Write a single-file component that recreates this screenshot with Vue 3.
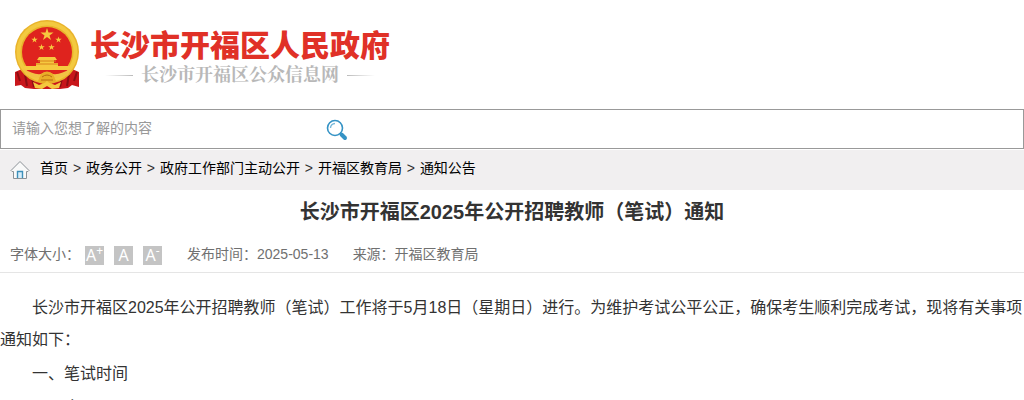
<script setup>
import {ref} from "vue";

const keyword = ref("");
const fontSize = ref(16);
const crumbs = ["首页", "政务公开", "政府工作部门主动公开", "开福区教育局", "通知公告"];
const paragraphs = [
  "长沙市开福区2025年公开招聘教师（笔试）工作将于5月18日（星期日）进行。为维护考试公平公正，确保考生顺利完成考试，现将有关事项通知如下：",
  "一、笔试时间",
  "2025年5月18日"
];
</script>

<template>
  <header class="header">
    <a href="#" class="logo">
      <!-- Emblème -->
      <svg class="emblem" width="66" height="70" viewBox="0 0 66 70" aria-hidden="true">
        <path d="M8 49L1 52V66L7 65L11 68L20 69H46L54 68L58 65L65 67V52L58 49Z" fill="#c8161b"/>
        <path d="M3 52L6 61M11 54L13 66M55 54L53 66M63 52L60 61M18 58L20 67M48 58L46 67" stroke="#8d0e14" stroke-width="2"/>
        <circle cx="33" cy="32" r="32" fill="#e9b32b"/>
        <circle cx="33" cy="32" r="28.500" fill="none" stroke="#f3c940" stroke-width="4"/>
        <circle cx="33" cy="32" r="25" fill="#df231e"/>
        <g fill="#f6c93f">
          <path id="star" d="M33 8L34.500 12.500H39.500L35.500 15.500L37 20L33 17L29 20L30.500 15.500L26.500 12.500H31.500Z"/>
          <use href="#star" transform="translate(4 12.500) scale(.5)"/>
          <use href="#star" transform="translate(28 12.500) scale(.5)"/>
          <use href="#star" transform="translate(11 20) scale(.5)"/>
          <use href="#star" transform="translate(21 20) scale(.5)"/>
          <path d="M25 37H41L43 40H40V43H44V46H56L54 50H12L10 46H22V43H26V40H23Z"/>
        </g>
        <path d="M24 41H42M22 44H44" stroke="#d8841d" stroke-width="1"/>
        <path d="M12 50H54L50 54H16Z" fill="#df231e"/>
        <path d="M9 48Q19 55 27 54Q33 50 39 54Q47 55 57 48L54 55Q46 59 39 57L33 60L27 57Q20 59 12 55Z" fill="#f2c344"/>
        <path d="M27 54Q33 49 39 54L42 61L37 64L33 61L29 64L24 61Z" fill="#e9ad28"/>
        <path d="M19 62L25 65L33 62L41 65L47 62L45 68L38 69L33 66L28 69L21 68Z" fill="#f4c83e"/>
        <path d="M28 57Q33 53 38 57M27 60H39" stroke="#b86b12" fill="none"/>
      </svg>
      <span class="names">
        <strong>长沙市开福区人民政府</strong>
        <span class="subname">长沙市开福区公众信息网</span>
      </span>
    </a>
  </header>

  <form class="search" @submit.prevent>
    <input v-model="keyword" type="text" placeholder="请输入您想了解的内容" aria-label="搜索">
    <button type="submit" aria-label="搜索">
      <svg width="22" height="22" viewBox="0 0 22 22" fill="none">
        <circle cx="9" cy="9" r="7.500" stroke="#3593c5" stroke-width="1.600"/>
        <path d="M4.500 9A4.500 4.500 0 0 1 9 4.500" stroke="#79b9da" stroke-width="1.400"/>
        <path d="M14 14L15.500 15.500" stroke="#3593c5" stroke-width="2"/>
        <path d="M15.500 15.500L19 19" stroke="#3593c5" stroke-width="4" stroke-linecap="round"/>
      </svg>
    </button>
  </form>

  <nav class="crumbs">
    <svg width="20" height="20" viewBox="0 0 20 20" fill="none" aria-hidden="true">
      <path d="M1 10.500L10 1.500L19 10.500L18 11.500H16.500V18.500H3.500V11.500H2Z" stroke="#8c9297" fill="#f9f9f9"/>
      <path d="M7.500 18V11.500H12.500V18" stroke="#3d8fba" stroke-width="1.400" fill="#d8eefa"/>
    </svg>
    <div>
      <template v-for="(crumb, index) in crumbs" :key="crumb">
        <span v-if="index > 0" class="sep"> &gt; </span><a href="#">{{ crumb }}</a>
      </template>
    </div>
  </nav>

  <main>
    <h1>长沙市开福区2025年公开招聘教师（笔试）通知</h1>
    <div class="infos">
      <span>字体大小：</span>
      <div class="sizes">
        <button aria-label="放大" @click="fontSize += 2">A<sup>+</sup></button>
        <button aria-label="默认" @click="fontSize = 16">A</button>
        <button aria-label="缩小" @click="fontSize -= 2">A<sup>-</sup></button>
      </div>
      <span class="date">发布时间：2025-05-13</span>
      <span>来源：开福区教育局</span>
    </div>
    <article :style="{ fontSize: fontSize + 'px' }">
      <p v-for="paragraph in paragraphs" :key="paragraph">{{ paragraph }}</p>
    </article>
  </main>
</template>

<style>
body {
  margin: 0;
  background: #fff;
}
#app {
  font-family: "Liberation Sans", "Noto Sans CJK SC", sans-serif;
  font-size: 14px;
}
</style>

<style scoped>
a {
  color: #000;
  text-decoration: none;
}
button {
  border: none;
  padding: 0;
  cursor: pointer;
}
.header {
  padding: 20px 14px 19px;
}
.logo {
  display: flex;
  gap: 10px;
}
.emblem {
  flex: none;
}
.names {
  display: flex;
  flex-direction: column;
  padding-top: 8px;
}
.names strong {
  color: #e03127;
  font-size: 30px;
  font-weight: 900;
  line-height: 36px;
}
.subname {
  display: flex;
  align-items: center;
  justify-content: center;
  gap: 8px;
  color: #b8b8b8;
  font-family: "Noto Serif CJK SC", "Noto Sans CJK SC", serif;
  font-size: 18px;
  font-weight: bold;
  line-height: 18px;
}
.subname::before,
.subname::after {
  content: "";
  width: 28px;
  height: 1px;
  margin-top: 4px;
  background: linear-gradient(to right, #fff, #bbb);
}
.subname::after {
  background: linear-gradient(to left, #fff, #bbb);
}
.search {
  display: flex;
  align-items: center;
  height: 38px;
  border: 1px solid #999;
}
.search input {
  width: 300px;
  padding: 0 11px 2px;
  border: none;
  outline: none;
  font: inherit;
}
.search input::placeholder {
  color: #999;
}
.search button {
  display: flex;
  margin-left: 3px;
  padding-top: 2px;
  background: none;
}
.crumbs {
  display: flex;
  align-items: center;
  gap: 10px;
  height: 40px;
  margin-top: 1px;
  padding: 0 10px;
  background: #f1eff0;
  line-height: 36px;
}
.crumbs div {
  padding-bottom: 4px;
}
.sep {
  padding: 0 1px;
  color: #333;
}
h1 {
  margin: 0;
  color: #333;
  font-size: 20px;
  line-height: 44px;
  text-align: center;
}
.infos {
  display: flex;
  align-items: center;
  height: 38px;
  padding: 0 10px;
  border-bottom: 1px solid #e5e5e5;
  color: #707070;
}
.sizes {
  display: flex;
  gap: 10px;
  margin: 4px 25px 0 5px;
}
.sizes button {
  width: 19px;
  height: 19px;
  background: #c4c4c4;
  color: #fff;
  font-family: "Noto Sans", sans-serif;
  font-size: 16px;
  line-height: 19px;
  white-space: nowrap;
}
.sizes sup {
  font-size: 12px;
  line-height: 0;
}
.date {
  margin-right: 24px;
}
article {
  padding-top: 19px;
  color: #333;
}
p {
  margin: 0 0 2px;
  line-height: 32px;
  text-indent: 2em;
}
</style>
